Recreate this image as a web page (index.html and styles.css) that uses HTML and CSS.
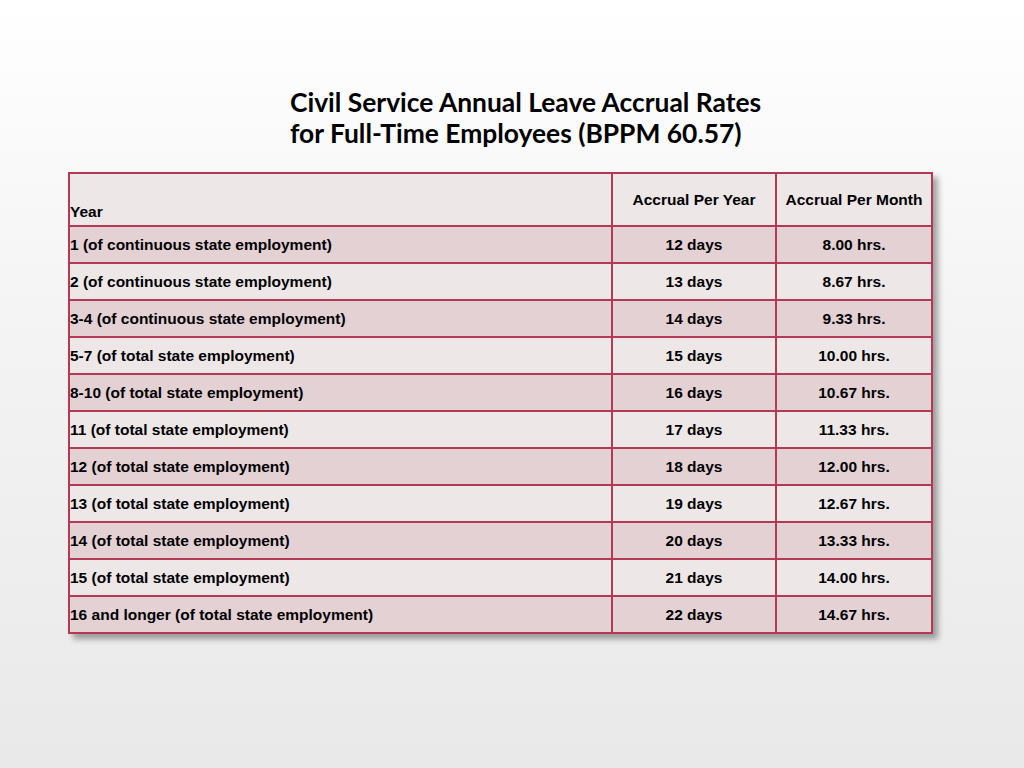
FILE: index.html
```html
<!DOCTYPE html>
<html>
<head>
<meta charset="utf-8">
<link rel="stylesheet" href="styles.css">
</head>
<body>
<div class="slide">
  <h1 class="title">Civil Service Annual Leave Accrual Rates<br>for Full-Time Employees (BPPM 60.57)</h1>
  <table class="rates">
    <colgroup>
      <col class="c1"><col class="c2"><col class="c3">
    </colgroup>
    <thead>
      <tr>
        <th class="year">Year</th>
        <th>Accrual Per Year</th>
        <th>Accrual Per Month</th>
      </tr>
    </thead>
    <tbody>
      <tr class="dark"><td>1 (of continuous state employment)</td><td>12 days</td><td>8.00 hrs.</td></tr>
      <tr><td>2 (of continuous state employment)</td><td>13 days</td><td>8.67 hrs.</td></tr>
      <tr class="dark"><td>3-4 (of continuous state employment)</td><td>14 days</td><td>9.33 hrs.</td></tr>
      <tr><td>5-7 (of total state employment)</td><td>15 days</td><td>10.00 hrs.</td></tr>
      <tr class="dark"><td>8-10 (of total state employment)</td><td>16 days</td><td>10.67 hrs.</td></tr>
      <tr><td>11 (of total state employment)</td><td>17 days</td><td>11.33 hrs.</td></tr>
      <tr class="dark"><td>12 (of total state employment)</td><td>18 days</td><td>12.00 hrs.</td></tr>
      <tr><td>13 (of total state employment)</td><td>19 days</td><td>12.67 hrs.</td></tr>
      <tr class="dark"><td>14 (of total state employment)</td><td>20 days</td><td>13.33 hrs.</td></tr>
      <tr><td>15 (of total state employment)</td><td>21 days</td><td>14.00 hrs.</td></tr>
      <tr class="dark"><td>16 and longer (of total state employment)</td><td>22 days</td><td>14.67 hrs.</td></tr>
    </tbody>
  </table>
</div>
</body>
</html>
```

FILE: styles.css
```css
html, body {
  margin: 0;
  padding: 0;
}
body {
  width: 1024px;
  height: 768px;
  background: linear-gradient(to bottom, #ffffff 0%, #f4f4f4 40%, #e9e9e9 100%);
  overflow: hidden;
}
.slide {
  padding-top: 87px;
  padding-left: 68px;
}
.title {
  margin: 0 0 23px 222px;
  font-family: Lato, "Liberation Sans", sans-serif;
  font-weight: 700;
  font-size: 26.4px;
  line-height: 31px;
  color: #000;
}
.rates {
  border-collapse: collapse;
  width: 863px;
  table-layout: fixed;
  font-family: "Liberation Sans", Arial, sans-serif;
  font-weight: 700;
  font-size: 15.5px;
  color: #000;
  box-shadow: 5px 5px 6px rgba(0, 0, 0, 0.35);
}
.c1 { width: 543px; }
.c2 { width: 164px; }
.c3 { width: 156px; }
.rates th, .rates td {
  border: 2px solid #b23a56;
  padding: 0;
  text-align: center;
  vertical-align: middle;
}
.rates thead tr {
  height: 53px;
  background: #ede7e8;
}
.rates th {
  font-weight: 700;
  font-size: 15.5px;
  padding-bottom: 0;
}
.rates th.year {
  text-align: left;
  vertical-align: bottom;
  padding-bottom: 4px;
}
.rates tbody tr {
  height: 37px;
  background: #ede7e8;
}
.rates tbody tr.dark {
  background: #e3d1d4;
}
.rates td:first-child {
  text-align: left;
}
```
